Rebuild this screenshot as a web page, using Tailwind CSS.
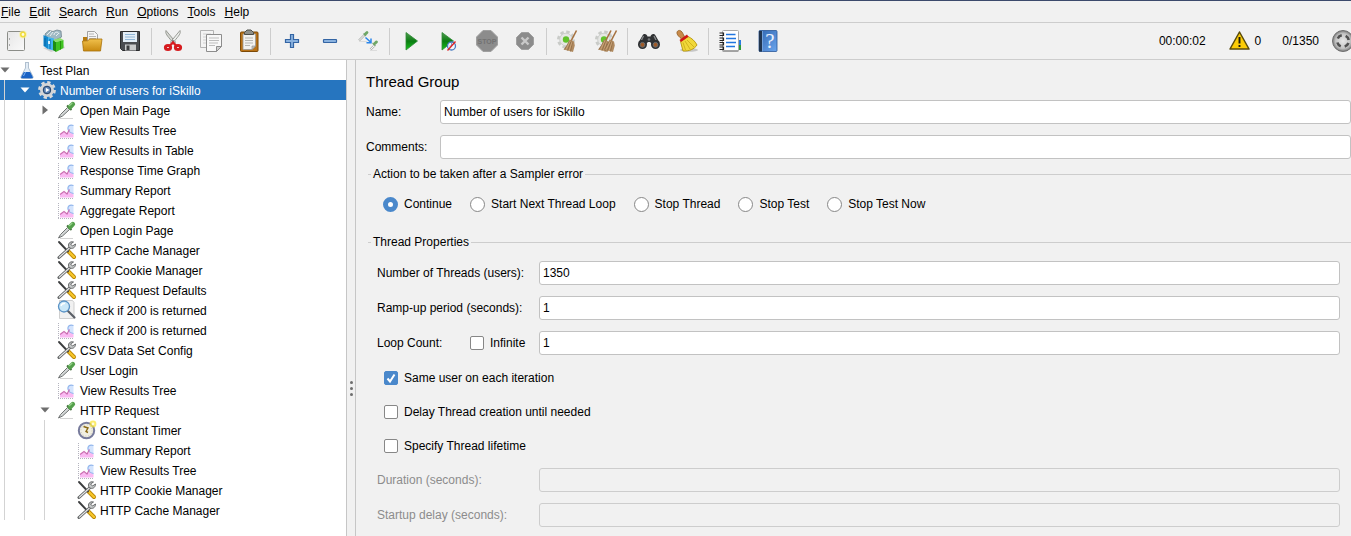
<!DOCTYPE html>
<html lang="en">
<head>
<meta charset="utf-8">
<title>Thread Group</title>
<script src="https://cdn.jsdelivr.net/npm/@tailwindcss/browser@4"></script>
</head>
<body class="flex h-screen flex-col overflow-hidden bg-[#f1f1f1] font-['Liberation_Sans',Arial,sans-serif] text-[12px] leading-4 text-black">

<svg width="0" height="0" class="absolute" aria-hidden="true">
  <defs>
    <linearGradient id="gPlay" x1="0" y1="0" x2="0" y2="1"><stop offset="0" stop-color="#4f9a4f"/><stop offset=".5" stop-color="#0b7d12"/><stop offset="1" stop-color="#16c21c"/></linearGradient>
    <linearGradient id="gFold" x1="0" y1="0" x2="0" y2="1"><stop offset="0" stop-color="#f0c04c"/><stop offset="1" stop-color="#c98a10"/></linearGradient>
    <linearGradient id="gBook" x1="0" y1="0" x2="1" y2="1"><stop offset="0" stop-color="#2f66b0"/><stop offset="1" stop-color="#6da6ee"/></linearGradient>
    <linearGradient id="gPage" x1="0" y1="0" x2="1" y2="1"><stop offset="0" stop-color="#e6e6e6"/><stop offset="1" stop-color="#fafafa"/></linearGradient>
    <radialGradient id="gDisc"><stop offset="0" stop-color="#e8e8e8"/><stop offset=".7" stop-color="#c4c4c4"/><stop offset="1" stop-color="#7b7b7b"/></radialGradient>

    <!-- toolbar -->
    <symbol id="new" viewBox="0 0 24 24"><rect x="3.500" y="2.500" width="17" height="19" rx="1" fill="url(#gPage)" stroke="#8b8d88"/><path d="M5.500 9v2M5.500 15v2" stroke="#aaa"/><circle cx="19" cy="5.500" r="4" fill="#fdf29a" opacity=".6"/><circle cx="19" cy="5.500" r="2.200" fill="#fffbe0" stroke="#f0dc3c" stroke-width="1.500"/></symbol>
    <symbol id="templates" viewBox="0 0 24 24"><path d="M1 19l8 4 14-4-2-4z" fill="#bbb" opacity=".6"/><path d="M3 5l4-3.500 4 1 4-1.500 4 1 .5 6-8 4-7-3z" fill="#9fb9c4" stroke="#71858f" stroke-width=".8"/><path d="M5 6l4-4M8 7l3-4M12 6c0-3 4-4 5-1M14 7l3-3" stroke="#e8eef0" fill="none"/><path d="M1.500 6L6 8v12l-4.500-3z" fill="#1389cf"/><path d="M6 8l6 1.500v12L6 20z" fill="#40b4ee"/><path d="M3 9v8M8 10v10" stroke="#0a65a5"/><path d="M6 12h2v3H6z" fill="#d9f0fa"/><path d="M11 11l3 2v10l-3-2z" fill="#1e8d12"/><path d="M11 11l7-2 3.500 2-7.500 2z" fill="#8be06a"/><path d="M14 13l7.500-2v8L14 23z" fill="#3fc321"/><path d="M18.500 12v8.500" stroke="#27930f"/></symbol>
    <symbol id="open" viewBox="0 0 24 24"><path d="M3 8h5l2 2h10v9H3z" fill="#b77b12"/><path d="M7.500 2.500h7l3 3V15h-10z" fill="#f5f5f5" stroke="#999" stroke-width=".9"/><path d="M9 5h5M9 7.500h7M9 9.500h7" stroke="#b5b5b5"/><path d="M2.500 12l5-.2 2.500-1.800h12l-1.500 12H3.500z" fill="url(#gFold)" stroke="#a8710a" stroke-width=".8"/></symbol>
    <symbol id="save" viewBox="0 0 24 24"><path d="M2.500 2.500h19v19h-17l-2-2z" fill="#4a4c50" stroke="#2b2c2e"/><rect x="5" y="3" width="14" height="10" fill="#e4eef7"/><path d="M7 5.500h10M7 8h10M7 10.500h10" stroke="#8fb5d6"/><rect x="7" y="15.500" width="11" height="6" fill="#c9cacb"/><rect x="8.500" y="16.500" width="3" height="4.500" fill="#3b3c3e"/></symbol>
    <symbol id="cut" viewBox="0 0 24 24"><path d="M5 1.500c-1 3 1 5 6 11l2.500 2 1-1.500z" fill="#d5d7d3" stroke="#84867f" stroke-width=".8"/><path d="M19 1.500c1 3-1 5-6 11l-2.500 2-1-1.500z" fill="#eceeec" stroke="#84867f" stroke-width=".8"/><circle cx="12" cy="12" r=".9" fill="#666"/><ellipse cx="7" cy="18.500" rx="2.600" ry="2" fill="none" stroke="#d61b1f" stroke-width="3"/><ellipse cx="17" cy="18.500" rx="2.600" ry="2" fill="none" stroke="#d61b1f" stroke-width="3"/><path d="M9 16.500L12 13.500l3 3" stroke="#d61b1f" stroke-width="2.400" fill="none"/></symbol>
    <symbol id="copy" viewBox="0 0 24 24"><path d="M1.500 1.500h13v17h-13z" fill="#f3f3f3" stroke="#b3b3b3"/><path d="M4 5h8M4 8h4M4 11h3M4 14h3" stroke="#cfcfcf"/><path d="M7.500 5.500h15v12l-5 5h-10z" fill="#f8f8f8" stroke="#8d8d8d"/><path d="M10 9h10M10 11.500h10M10 14h9M10 16.500h6" stroke="#bdbdbd"/><path d="M17.500 22.500v-5h5z" fill="#d0d0d0" stroke="#8d8d8d"/></symbol>
    <symbol id="paste" viewBox="0 0 24 24"><rect x="3.500" y="3" width="17.500" height="19.500" rx="1" fill="#b97318" stroke="#7d4a06"/><path d="M6 5h12.500v12l-3.500 3.500H6z" fill="#f2f2f0" stroke="#9a9a95" stroke-width=".8"/><path d="M15 20.500V17h3.500z" fill="#c9c9c5" stroke="#888" stroke-width=".6"/><path d="M8 9h8M8 11.500h8M8 14h8M8 16.500h5" stroke="#b5b5b0"/><path d="M7.500 5.500V3.500L10 1h4l2.500 2.500v2z" fill="#8e908b" stroke="#4c4e49"/></symbol>
    <symbol id="plus" viewBox="0 0 24 24"><path d="M10.500 5.500h3v5h5v3h-5v5h-3v-5h-5v-3h5z" fill="#8ab2df" stroke="#3465a4" stroke-width="1.200"/></symbol>
    <symbol id="minus" viewBox="0 0 24 24"><rect x="5.500" y="10.500" width="13" height="3" rx=".5" fill="#8ab2df" stroke="#3465a4" stroke-width="1.200"/></symbol>
    <symbol id="toggle" viewBox="0 0 24 24"><path d="M3 11.500L8.500 6M14.500 20.500L18 17" stroke="#b4b6b3" stroke-width="2.400"/><path d="M3 11.500L8.500 6M14.500 20.500L18 17" stroke="#f6f6f6" stroke-width="1"/><path d="M3 12.500h8M14 21.500h7" stroke="#dcdcdc"/><path d="M7.500 4.500l2.500 2.500M16.500 14l3 3" stroke="#88a583" stroke-width="1.200"/><path d="M9.200 5.300L11 3.500M18.500 14.700l2-1.800" stroke="#6fa766" stroke-width="2.800" stroke-linecap="round"/><path d="M9.500 8.500l5 4.500M15 9.500v4.300h-4.500" stroke="#2b86ea" stroke-width="1.500" fill="none"/></symbol>
    <symbol id="play" viewBox="0 0 24 24"><path d="M7 3.500v17.500L18.500 12z" fill="url(#gPlay)" stroke="#2d8a35" stroke-width=".8"/></symbol>
    <symbol id="playno" viewBox="0 0 24 24"><path d="M5 3.500v17.500L16.500 12z" fill="url(#gPlay)" stroke="#2d8a35" stroke-width=".8"/><circle cx="14.500" cy="17" r="4" fill="#f3f6fb" stroke="#4a7cc0" stroke-width="1.300"/><path d="M14.500 17v-3M14.500 17h-2" stroke="#7a9ccc"/><path d="M10.500 21.500l8-9" stroke="#e02424" stroke-width="1.400"/></symbol>
    <symbol id="stop" viewBox="0 0 24 24"><path d="M8 1.500h8l6.500 6.500v8L16 22.500H8L1.500 16V8z" fill="#8c8c8c" stroke="#a0a0a0"/><text x="12" y="15.300" text-anchor="middle" font-family="Liberation Sans" font-weight="700" font-size="7" fill="#727272">STOP</text></symbol>
    <symbol id="shutdown" viewBox="0 0 24 24"><path d="M8.500 3.500h7l5 5v7l-5 5h-7l-5-5v-7z" fill="#8c8c8c" stroke="#a0a0a0"/><path d="M8.500 8.500l7 7M15.500 8.500l-7 7" stroke="#c9c9c9" stroke-width="2.400"/></symbol>
    <symbol id="gearlet" viewBox="0 0 24 24"><circle cx="10" cy="10.500" r="7.500" fill="none" stroke="#c9cbc8" stroke-width="3" stroke-dasharray="3.400 2.490"/><circle cx="10" cy="10.500" r="6.300" fill="#e6e7e5" stroke="#cdcfcc"/><circle cx="10" cy="10.500" r="3.200" fill="#62c22c"/></symbol>
    <symbol id="besom" viewBox="0 0 24 24"><path d="M14.500 13L20.500 1.500" stroke="#a5713f" stroke-width="1.600"/><path d="M13.500 10.500l4.500 2 .8 4-1.800 6.500-9.500-2.500 3.500-4z" fill="#b08a60"/><path d="M13.500 12L8.500 20.500M15 12.500l-3.500 9M16.500 13l-2 9.500" stroke="#8a6742" stroke-width=".7"/><path d="M14.200 12l-4 8.500M16 13l-3 9" stroke="#d9b387" stroke-width=".6"/></symbol>
    <symbol id="clear" viewBox="0 0 24 24"><use href="#gearlet"/><use href="#besom"/></symbol>
    <symbol id="clearall" viewBox="0 0 24 24"><use href="#gearlet"/><use href="#besom" x="-3.500"/><use href="#besom" x="2"/></symbol>
    <symbol id="find" viewBox="0 0 24 24"><path d="M5.500 6.500C7 4 10 5 10.500 7.500h3C14 5 17 4 18.500 6.500l4 7-5 4-4.500-4.500h-2L6.500 17.500l-5-4z" fill="#303234"/><path d="M6.500 7l-2 4M17 7l2 4" stroke="#8a8c8e" stroke-width="1.300"/><circle cx="5.500" cy="15.500" r="4.500" fill="#2e3032"/><circle cx="18.500" cy="15.500" r="4.500" fill="#2e3032"/><circle cx="5.500" cy="15.800" r="2.400" fill="#a15a26" stroke="#6d7072"/><circle cx="18.500" cy="15.800" r="2.400" fill="#a15a26" stroke="#6d7072"/><circle cx="12" cy="10.500" r="1.300" fill="#77797b"/></symbol>
    <symbol id="broom" viewBox="0 0 24 24"><ellipse cx="14" cy="21" rx="9" ry="1.800" fill="#aaa" opacity=".6"/><path d="M2 4.500C1.500 2 4 .5 6 2c1.500 1.200 2 3 3.500 5.500L6.500 10C4.500 8 2.500 6.500 2 4.500z" fill="#c88a4a" stroke="#8e5a1f" stroke-width=".8"/><path d="M5.500 12.500L13 7.500c3.500 1.500 7 4.500 9 8.500-2.500 4-8 6.500-14 6z" fill="#f1d83a" stroke="#b59408" stroke-width=".9"/><path d="M8 13.500l2.500 7.500M10 12l5 8M12 11l7 7" stroke="#c9aa14" stroke-width=".8"/><path d="M4.500 11l7.500-5.500 1.500 2.300-7.500 5.200z" fill="#cf1717"/></symbol>
    <symbol id="list" viewBox="0 0 24 24"><path d="M20 11h3v5h-3z" fill="#2a7be0"/><path d="M20 16h3v5h-3z" fill="#2c9a3a"/><rect x="4.500" y="1.500" width="16" height="20.500" rx="1" fill="#fff" stroke="#a9a9a9"/><path d="M4.500 22h16" stroke="#777" fill="none"/><path d="M8 5.500h9.500M8 9.500h10M8 13.500h10M8 17.500h9" stroke="#2176e0" stroke-width="1.500"/><path d="M1.500 4h4v2.500h-4M1.500 9h4v2.500h-4M1.500 13.500h4V16h-4M1.500 18h4v2.500h-4" fill="none" stroke="#242424" stroke-width="1.200"/></symbol>
    <symbol id="help" viewBox="0 0 24 24"><rect x="3" y="1.500" width="18" height="21" rx="1" fill="url(#gBook)" stroke="#2a5797" stroke-width=".8"/><path d="M3 2h3.500v20.500H3z" fill="#21354f"/><path d="M6.500 2v20.500" stroke="#83b4f0" stroke-width=".8"/><text x="13.800" y="19" text-anchor="middle" font-family="Liberation Serif" font-size="21" fill="#e9f2fd">?</text></symbol>
    <symbol id="warn" viewBox="0 0 24 24"><path d="M11.500 3L21 20H2z" fill="#fccc06" stroke="#5a4b0a" stroke-width="1.500" stroke-linejoin="round"/><path d="M11.500 8v6.500M11.500 16v2" stroke="#1c1a0c" stroke-width="1.900"/></symbol>
    <symbol id="engine" viewBox="0 0 24 24"><circle cx="12" cy="12" r="10.500" fill="url(#gDisc)" stroke="#707070"/><circle cx="12" cy="12" r="5.800" fill="none" stroke="#505050" stroke-width="2.600" stroke-dasharray="5 4.110" stroke-dashoffset="-2.100"/></symbol>

    <!-- tree -->
    <symbol id="flask" viewBox="0 0 20 20"><path d="M8 2.500h4M8.500 3v5L4 16.500c-.5 1 0 2 1.500 2h9c1.500 0 2-1 1.500-2L11.500 8V3" fill="#e2ecf5" stroke="#a8b9c9" stroke-width=".9"/><path d="M6.800 12h6.400l2.600 5c.3 1-.3 1.300-1.300 1.300h-9c-1 0-1.600-.3-1.300-1.300z" fill="#1a63c4"/><path d="M6.500 16l2-4" stroke="#7fb4f2"/></symbol>
    <symbol id="gear" viewBox="0 0 20 20"><circle cx="10" cy="10" r="7.400" fill="none" stroke="#d9dadb" stroke-width="3" stroke-dasharray="3.200 2.612"/><circle cx="10" cy="10" r="5.600" fill="#3c5f8c" stroke="#d3d5d7" stroke-width="2.800"/><circle cx="10" cy="10" r="3.700" fill="#5f86b8" stroke="#29486f"/><path d="M8.800 7.800v4.400l3.600-2.200z" fill="#fff"/></symbol>
    <symbol id="dropper" viewBox="0 0 20 20"><path d="M3 18.500h13" stroke="#d4d4d4"/><path d="M1.500 18l2-3.500 7-7 2 2-7 6.500z" fill="#d3d6d6" stroke="#707373" stroke-width="1"/><path d="M10 5.500l4.500 4.500" stroke="#47703f" stroke-width="1.800"/><path d="M13 7L15.800 4.200" stroke="#55a04c" stroke-width="4.600" stroke-linecap="round"/><path d="M12.500 5.500L15 3.200" stroke="#96d28a" stroke-width="1.200" stroke-linecap="round"/></symbol>
    <symbol id="graph" viewBox="0 0 20 20"><path d="M1.500 3v16M1 18.500h16" stroke="#b4b4be" stroke-dasharray="1 1"/><path d="M3 17.500v-3l3.500-2 3.500 2 3-4 3.500 3.500v3.500z" fill="#fab9f2"/><path d="M16.500 5.500c-4-1.500-6 1-6 4l6 5z" fill="#d3e4fd"/><path d="M16.500 5.500c-4-1.500-6 1-5.500 3.500s2.500 4 5.500 4.500" fill="none" stroke="#92b6ec" stroke-width="1.200"/><path d="M3 14.500l4-3 3 2.500 2.500-4.500" fill="none" stroke="#cc6bb2" stroke-width="1.200"/></symbol>
    <symbol id="tools" viewBox="0 0 20 20"><path d="M11.500 11.500l5.500 5.500" stroke="#b98500" stroke-width="4" stroke-linecap="round"/><path d="M11.500 11.500l5.500 5.500" stroke="#f6c62a" stroke-width="2.400" stroke-linecap="round"/><path d="M2 2l9 9.500" stroke="#3d3f40" stroke-width="1.900" stroke-linecap="round"/><path d="M2 17.500L12.500 8" stroke="#5c5f60" stroke-width="3" stroke-linecap="round"/><path d="M2.300 17.200L12.500 8" stroke="#e4e5e5" stroke-width="1.200" stroke-linecap="round"/><path d="M16.500 2c-4-1-6 2-4.500 5.500 3 2 6.500.5 6.500-3.500L15.500 6l-2-2z" fill="#c5c8c8" stroke="#5c5f60" stroke-width=".9"/></symbol>
    <symbol id="magnify" viewBox="0 0 20 20"><path d="M2.500.5h13l1.500 2v16h-14.500z" fill="#f1f1f1" stroke="#c4c4c4" stroke-width=".8"/><path d="M11 11l6.500 6.500" stroke="#5b6068" stroke-width="2.200" stroke-linecap="round"/><circle cx="7" cy="6.500" r="5.500" fill="#cbe8f8" stroke="#5a93c6" stroke-width="1.300"/><path d="M4 6c.5-2 2-2.800 4-2.500" stroke="#fff" stroke-width="1.400" fill="none"/></symbol>
    <symbol id="timer" viewBox="0 0 20 20"><circle cx="9.500" cy="10.500" r="7.700" fill="#f1efe2" stroke="#777b9c" stroke-width="2"/><circle cx="9.500" cy="10.500" r="5.600" fill="none" stroke="#b9b9ae" stroke-width=".8" stroke-dasharray="1 1.900"/><path d="M6.500 6.500L11 8l-2 3.500 2 1" stroke="#8a6914" stroke-width="1.400" fill="none"/><circle cx="16" cy="4" r="3.400" fill="#fbe63a" opacity=".75"/><circle cx="16" cy="4" r="1.400" fill="#fffce0"/></symbol>
  </defs>
</svg>

<header class="border-t border-[#3c4a6c]">
  <nav class="flex h-[22px] items-center gap-[9px] border-b border-[#cdcdcd] pl-px" aria-label="Menu bar">
    <button><u>F</u>ile</button>
    <button><u>E</u>dit</button>
    <button><u>S</u>earch</button>
    <button><u>R</u>un</button>
    <button><u>O</u>ptions</button>
    <button><u>T</u>ools</button>
    <button><u>H</u>elp</button>
  </nav>
  <div class="flex h-[37px] items-center overflow-hidden border-b border-[#cdcdcd]">
    <div id="toolbar" class="flex shrink-0 items-center" role="toolbar" aria-label="Tools"></div>
    <div class="-mr-1 ml-auto flex shrink-0 items-center">
      <span>00:00:02</span>
      <button class="ml-[22px] flex items-center gap-[3px]" aria-label="Warnings 0"><svg class="size-6"><use href="#warn"/></svg><span>0</span></button>
      <span class="ml-[21px]">0/1350</span>
      <svg class="ml-3 size-6"><use href="#engine"/></svg>
    </div>
  </div>
</header>

<div class="flex min-h-0 flex-1">
  <ul id="tree" class="w-[347px] shrink-0 overflow-hidden border-r border-[#c6c6c6] bg-white" role="tree" aria-label="Test plan"></ul>
  <div class="flex w-2 shrink-0 flex-col items-center justify-center gap-[3px] pt-[181px]" role="separator" aria-orientation="vertical">
    <i class="size-[3px] rounded-full bg-[#6e6e6e]"></i>
    <i class="size-[3px] rounded-full bg-[#6e6e6e]"></i>
    <i class="size-[3px] rounded-full bg-[#6e6e6e]"></i>
  </div>
  <main class="min-w-0 flex-1 overflow-hidden border-l border-[#c6c6c6] pt-3">
    <h1 class="pl-[10px] text-[15px] leading-5">Thread Group</h1>
    <div class="mt-2 flex flex-col gap-[11px] pl-[10px]">
      <div class="flex items-center">
        <label for="name" class="w-[74px]">Name:</label>
        <input id="name" value="Number of users for iSkillo" class="h-6 min-w-0 flex-1 rounded-[3px] border border-[#c2c2c2] bg-white px-[3px]">
      </div>
      <div class="flex items-center">
        <label for="comments" class="w-[74px]">Comments:</label>
        <input id="comments" class="h-6 min-w-0 flex-1 rounded-[3px] border border-[#c2c2c2] bg-white px-[3px]">
      </div>
    </div>

    <fieldset class="mt-[7px] pl-3">
      <legend class="flex w-full items-center gap-[2px]"><span class="h-px w-[3px] bg-[#cdcdcd]"></span>Action to be taken after a Sampler error<span class="h-px flex-1 bg-[#cdcdcd]"></span></legend>
      <div class="flex items-center gap-[18px] pt-[14px] pl-[15px]">
        <label class="flex items-center gap-[6px]"><input type="radio" name="act" checked class="size-[15px] appearance-none rounded-full border border-[#878787] bg-white checked:border-5 checked:border-[#4a88cb]">Continue</label>
        <label class="flex items-center gap-[6px]"><input type="radio" name="act" class="size-[15px] appearance-none rounded-full border border-[#878787] bg-white checked:border-5 checked:border-[#4a88cb]">Start Next Thread Loop</label>
        <label class="flex items-center gap-[6px]"><input type="radio" name="act" class="size-[15px] appearance-none rounded-full border border-[#878787] bg-white checked:border-5 checked:border-[#4a88cb]">Stop Thread</label>
        <label class="flex items-center gap-[6px]"><input type="radio" name="act" class="size-[15px] appearance-none rounded-full border border-[#878787] bg-white checked:border-5 checked:border-[#4a88cb]">Stop Test</label>
        <label class="flex items-center gap-[6px]"><input type="radio" name="act" class="size-[15px] appearance-none rounded-full border border-[#878787] bg-white checked:border-5 checked:border-[#4a88cb]">Stop Test Now</label>
      </div>
    </fieldset>

    <fieldset class="mt-[22px] pl-3">
      <legend class="flex w-full items-center gap-[2px]"><span class="h-px w-[3px] bg-[#cdcdcd]"></span>Thread Properties<span class="h-px flex-1 bg-[#cdcdcd]"></span></legend>
      <div class="flex flex-col gap-[11px] pt-[11px] pr-[11px] pl-[9px]">
        <div class="flex items-center">
          <label for="threads" class="w-[162px]">Number of Threads (users):</label>
          <input id="threads" value="1350" class="h-6 min-w-0 flex-1 rounded-[3px] border border-[#c2c2c2] bg-white px-[3px]">
        </div>
        <div class="flex items-center">
          <label for="ramp" class="w-[162px]">Ramp-up period (seconds):</label>
          <input id="ramp" value="1" class="h-6 min-w-0 flex-1 rounded-[3px] border border-[#c2c2c2] bg-white px-[3px]">
        </div>
        <div class="flex items-center">
          <label for="loops" class="w-[93px]">Loop Count:</label>
          <label class="flex w-[69px] items-center gap-[6px]"><input type="checkbox" class="size-[14px] appearance-none rounded-[2px] border border-[#878787] bg-white">Infinite</label>
          <input id="loops" value="1" class="h-6 min-w-0 flex-1 rounded-[3px] border border-[#c2c2c2] bg-white px-[3px]">
        </div>
        <div class="flex flex-col items-start gap-[18px] pt-1 pb-[3px] pl-[7px]">
          <label class="flex items-center gap-[6px]"><span class="grid size-[14px]"><input type="checkbox" checked class="peer col-start-1 row-start-1 size-[14px] appearance-none rounded-[2px] border border-[#878787] bg-white checked:border-[#4a88cb] checked:bg-[#4a88cb]"><svg viewBox="0 0 14 14" class="pointer-events-none invisible col-start-1 row-start-1 size-[14px] peer-checked:visible"><path d="M3.500 7.500L6 10.500L10.500 3.500" fill="none" stroke="#fff" stroke-width="2"/></svg></span>Same user on each iteration</label>
          <label class="flex items-center gap-[6px]"><input type="checkbox" class="size-[14px] appearance-none rounded-[2px] border border-[#878787] bg-white">Delay Thread creation until needed</label>
          <label class="flex items-center gap-[6px]"><input type="checkbox" class="size-[14px] appearance-none rounded-[2px] border border-[#878787] bg-white">Specify Thread lifetime</label>
        </div>
        <div class="flex items-center text-[#8c8c8c]">
          <label for="duration" class="w-[162px]">Duration (seconds):</label>
          <input id="duration" disabled class="h-6 min-w-0 flex-1 rounded-[3px] border border-[#cdcdcd] px-[3px]">
        </div>
        <div class="flex items-center text-[#8c8c8c]">
          <label for="delay" class="w-[162px]">Startup delay (seconds):</label>
          <input id="delay" disabled class="h-6 min-w-0 flex-1 rounded-[3px] border border-[#cdcdcd] px-[3px]">
        </div>
      </div>
    </fieldset>
  </main>
</div>

<script>
  // Toolbar groups, divided by separators: [icon, label]
  const groups = [
    [['new', 'New'], ['templates', 'Templates'], ['open', 'Open'], ['save', 'Save']],
    [['cut', 'Cut'], ['copy', 'Copy'], ['paste', 'Paste']],
    [['plus', 'Expand All'], ['minus', 'Collapse All'], ['toggle', 'Toggle']],
    [['play', 'Start'], ['playno', 'Start no pauses'], ['stop', 'Stop'], ['shutdown', 'Shutdown']],
    [['clear', 'Clear'], ['clearall', 'Clear All']],
    [['find', 'Search'], ['broom', 'Reset Search']],
    [['list', 'Function Helper'], ['help', 'Help']]
  ];
  document.getElementById('toolbar').innerHTML = groups.map(g =>
    '<div class="flex gap-[6px]">' + g.map(([icon, label]) =>
      `<button class="flex h-8 w-8 items-center justify-center" aria-label="${label}"><svg class="size-6"><use href="#${icon}"/></svg></button>`
    ).join('') + '</div>'
  ).join('<span class="mx-[5px] h-[27px] w-px bg-[#cdcdcd]"></span>');

  // Tree rows: [depth, icon, label, state]
  const rows = [
    [0, 'flask', 'Test Plan', 'open'],
    [1, 'gear', 'Number of users for iSkillo', 'open'],
    [2, 'dropper', 'Open Main Page', 'closed'],
    [2, 'graph', 'View Results Tree'],
    [2, 'graph', 'View Results in Table'],
    [2, 'graph', 'Response Time Graph'],
    [2, 'graph', 'Summary Report'],
    [2, 'graph', 'Aggregate Report'],
    [2, 'dropper', 'Open Login Page'],
    [2, 'tools', 'HTTP Cache Manager'],
    [2, 'tools', 'HTTP Cookie Manager'],
    [2, 'tools', 'HTTP Request Defaults'],
    [2, 'magnify', 'Check if 200 is returned'],
    [2, 'graph', 'Check if 200 is returned'],
    [2, 'tools', 'CSV Data Set Config'],
    [2, 'dropper', 'User Login'],
    [2, 'graph', 'View Results Tree'],
    [2, 'dropper', 'HTTP Request', 'open'],
    [3, 'timer', 'Constant Timer'],
    [3, 'graph', 'Summary Report'],
    [3, 'graph', 'View Results Tree'],
    [3, 'tools', 'HTTP Cookie Manager'],
    [3, 'tools', 'HTTP Cache Manager']
  ];
  const arrows = { open: 'M.5 2.500h9L5 7.500z', closed: 'M2.500 .5v9L8 5z' };
  document.getElementById('tree').innerHTML = rows.map(([depth, icon, label, state], i) => {
    const selected = i === 1;
    const guides = '<span class="ml-1 h-5 w-4 shrink-0 border-l border-[#d3d3d3]"></span>'.repeat(depth);
    const arrow = state
      ? `<button class="w-[17px] shrink-0" aria-label="Toggle ${label}"><svg viewBox="0 0 10 10" class="size-[10px] fill-current"><path d="${arrows[state]}"/></svg></button>`
      : '<span class="w-[17px] shrink-0"></span>';
    return `<li role="treeitem" aria-level="${depth + 1}" class="flex h-5 items-center ${selected ? 'bg-[#2675bf] text-white' : 'text-[#6e6e6e]'}">${guides}${arrow}<svg class="size-5 shrink-0"><use href="#${icon}"/></svg><span class="ml-[3px] pt-0.5 ${selected ? 'text-white' : 'text-black'}">${label}</span></li>`;
  }).join('');
</script>
</body>
</html>
